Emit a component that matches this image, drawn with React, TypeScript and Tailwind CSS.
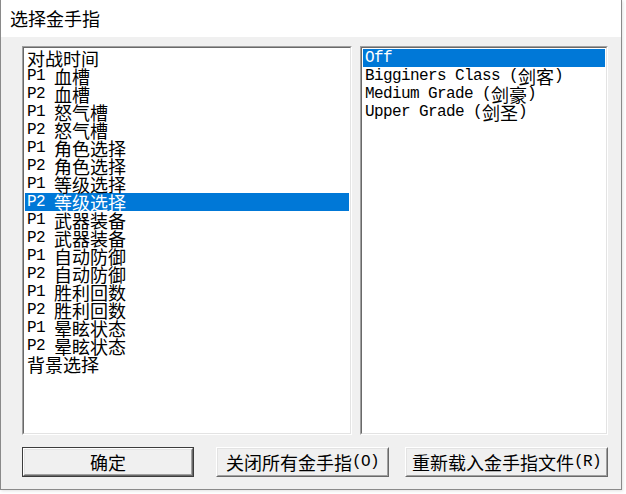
import React from "react";

const CJK = '"Noto Sans CJK SC", "Noto Sans", sans-serif';

function Mixed({ text }: { text: string }) {
  const parts = text.split(/([\u0000-\u00ff]+)/).filter((p) => p.length > 0);
  return (
    <>
      {parts.map((p, i) =>
        /^[\u0000-\u00ff]+$/.test(p) ? (
          <span key={i} className="text-[16px] leading-[18px] tracking-[-0.6px] whitespace-pre font-['Liberation_Mono',monospace]">
            {p}
          </span>
        ) : (
          <span key={i} className="text-[18px] leading-[18px] font-['Noto_Sans_CJK_SC',sans-serif]">
            {p}
          </span>
        )
      )}
    </>
  );
}

const leftItems = [
  "对战时间",
  "P1 血槽",
  "P2 血槽",
  "P1 怒气槽",
  "P2 怒气槽",
  "P1 角色选择",
  "P2 角色选择",
  "P1 等级选择",
  "P2 等级选择",
  "P1 武器装备",
  "P2 武器装备",
  "P1 自动防御",
  "P2 自动防御",
  "P1 胜利回数",
  "P2 胜利回数",
  "P1 晕眩状态",
  "P2 晕眩状态",
  "背景选择",
];

const rightItems = ["Off", "Bigginers Class (剑客)", "Medium Grade (剑豪)", "Upper Grade (剑圣)"];

function ListBox({
  items,
  selected,
  className,
}: {
  items: string[];
  selected: number;
  className: string;
}) {
  return (
    <div
      className={
        "h-[389px] border border-t-[#a0a0a0] border-l-[#a0a0a0] border-b-white border-r-white " + className
      }
    >
      <div className="h-full bg-white border border-t-[#696969] border-l-[#696969] border-b-[#e3e3e3] border-r-[#e3e3e3] p-[1px] overflow-hidden">
        {items.map((it, i) => (
          <div
            key={i}
            className={
              "h-[18px] leading-[18px] pl-[2px] whitespace-nowrap flex items-end " +
              (i === selected ? "bg-[#0078d7] text-white" : "text-black")
            }
          >
            <Mixed text={it} />
          </div>
        ))}
      </div>
    </div>
  );
}

function Button({ label, isDefault, className }: { label: string; isDefault?: boolean; className: string }) {
  return (
    <div className={"h-[30px] " + (isDefault ? "border border-[#3c3c3c] " : "") + className}>
      <div className="h-full border border-t-white border-l-white border-b-[#696969] border-r-[#696969]">
        <div className="h-full border border-t-[#e3e3e3] border-l-[#e3e3e3] border-b-[#a0a0a0] border-r-[#a0a0a0] bg-[#f0f0f0] flex items-center justify-center text-black">
          <Mixed text={label} />
        </div>
      </div>
    </div>
  );
}

export default function App() {
  return (
    <div className="w-[626px] h-[494px] bg-white overflow-hidden" style={{ fontFamily: CJK }}>
      <div className="w-[622px] h-[490px] border-l border-r border-b border-[#8a8a8a] flex flex-col shadow-[1px_1px_3px_rgba(0,0,0,0.12)]">
        <div className="h-[37px] bg-white pl-[9px] flex items-center text-[18px] text-black font-['Noto_Sans_CJK_SC',sans-serif]">
          选择金手指
        </div>
        <div className="flex-1 bg-[#f0f0f0] pl-[21px] pt-[9px]">
          <div className="flex gap-[8px]">
            <ListBox items={leftItems} selected={8} className="w-[330px]" />
            <ListBox items={rightItems} selected={0} className="w-[248px]" />
          </div>
          <div className="flex mt-[12px]">
            <Button label="确定" isDefault className="w-[172px]" />
            <Button label="关闭所有金手指(O)" className="w-[173px] ml-[22px]" />
            <Button label="重新载入金手指文件(R)" className="w-[203px] ml-[16px]" />
          </div>
        </div>
      </div>
    </div>
  );
}
